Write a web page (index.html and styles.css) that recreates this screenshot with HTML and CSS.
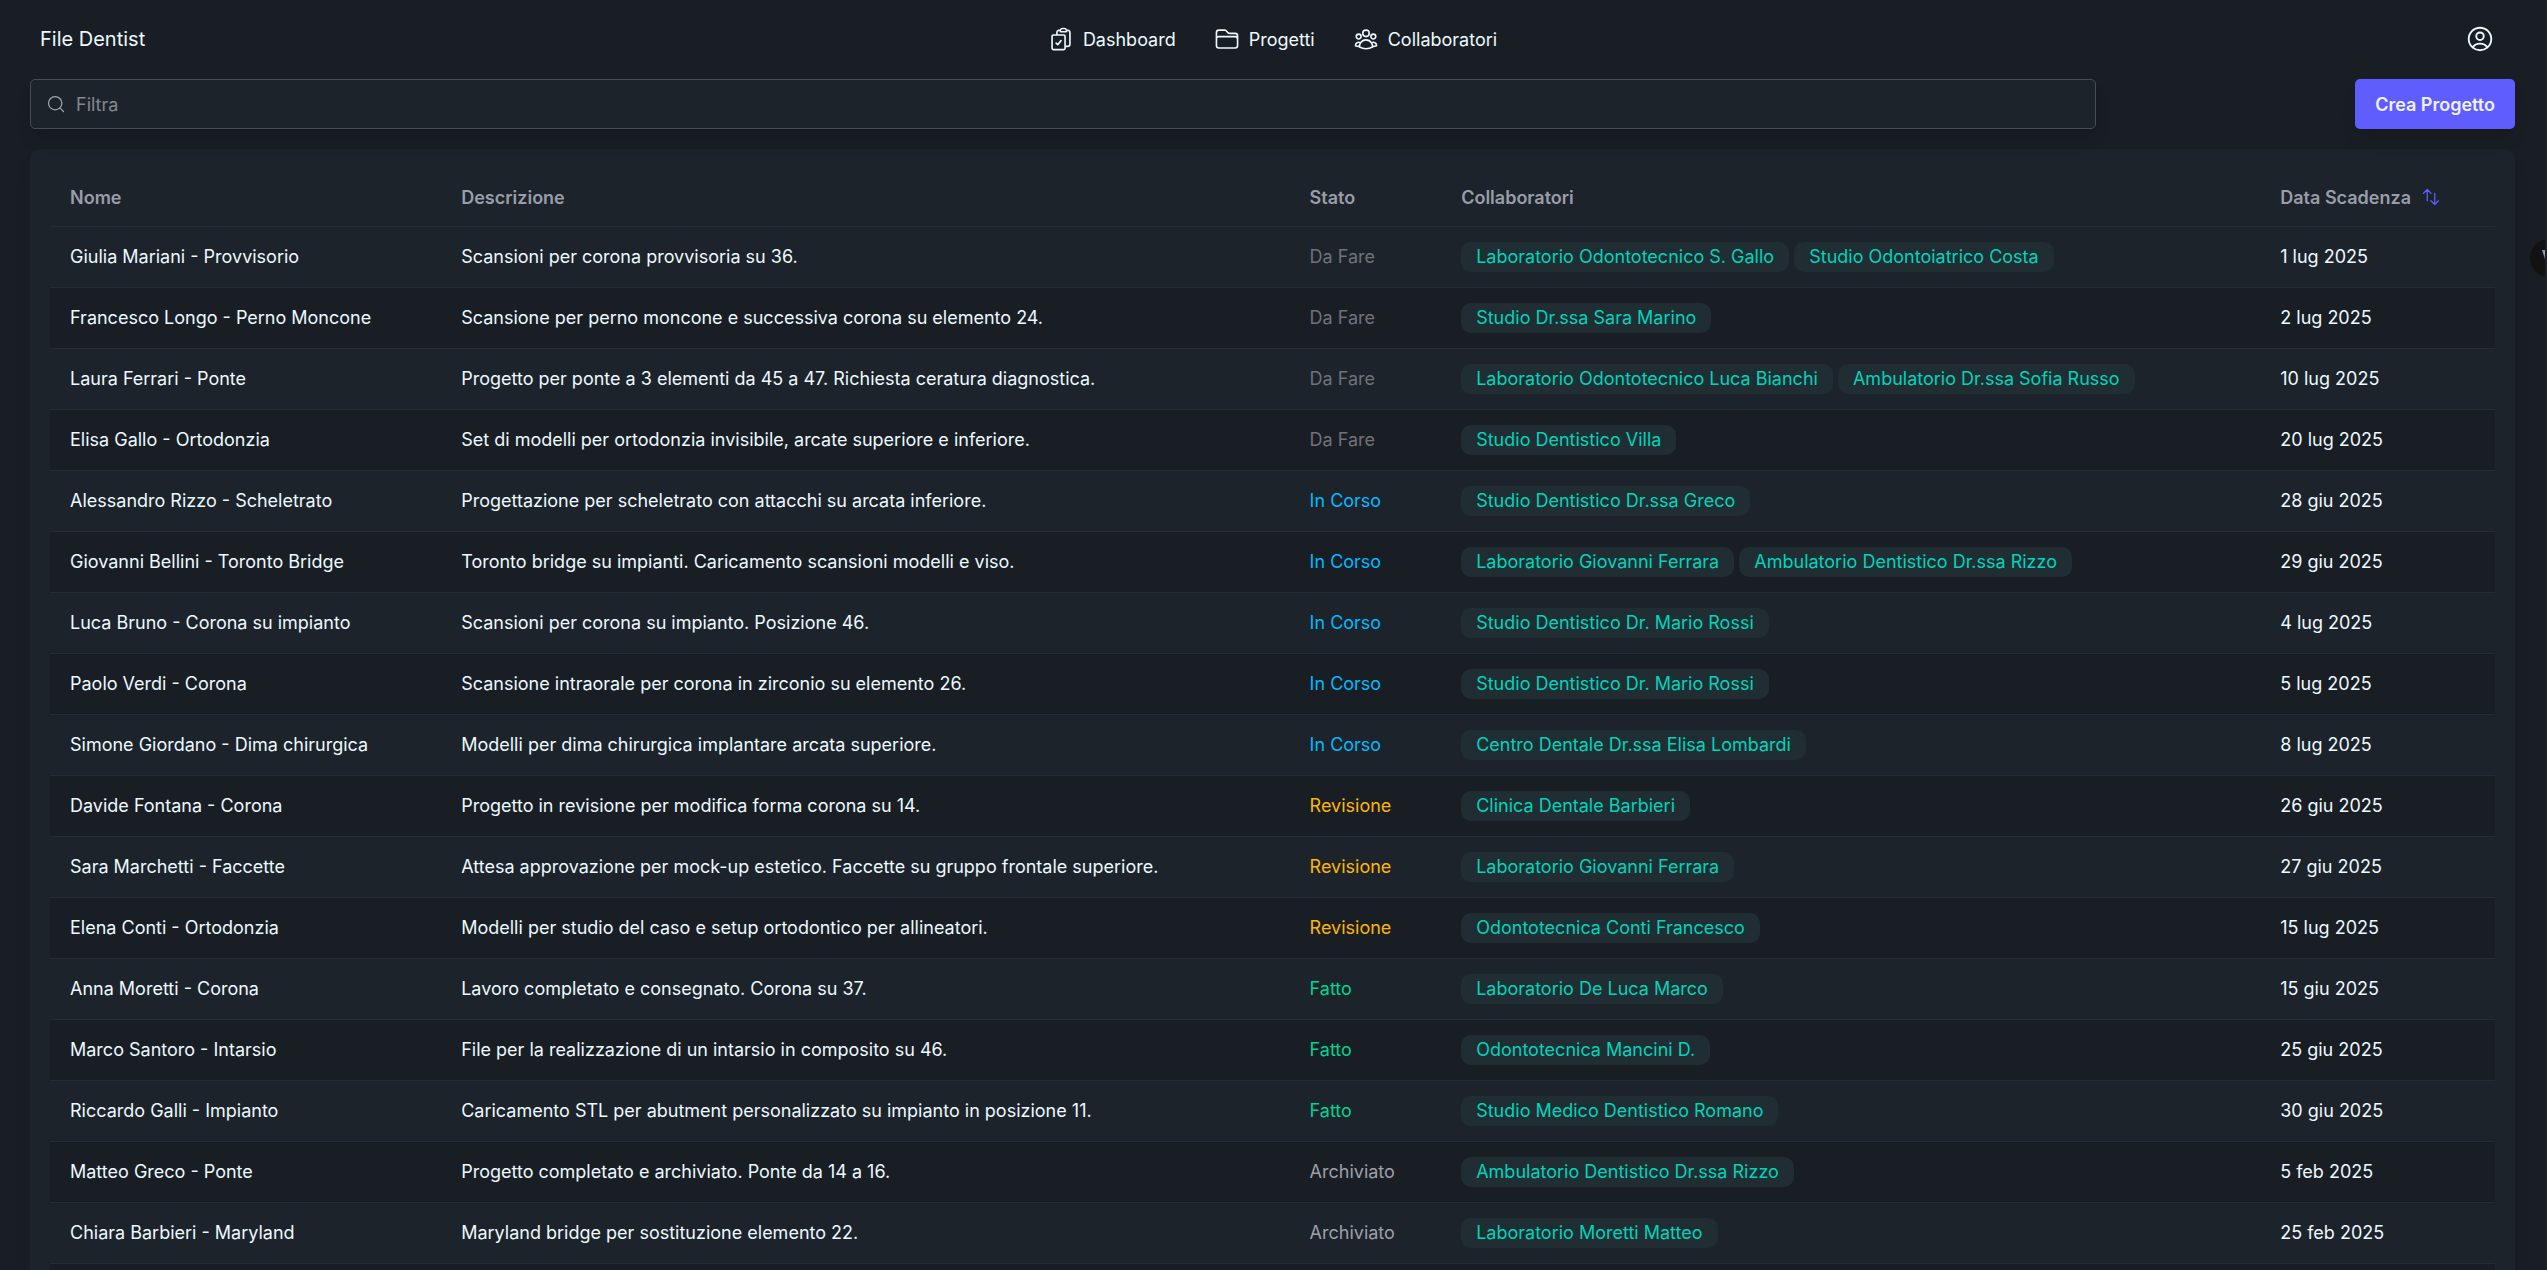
FILE: index.html
```html
<!DOCTYPE html>
<html lang="it">
<head>
  <meta charset="UTF-8">
  <meta name="viewport" content="width=device-width, initial-scale=1.0">
  <title>File Dentist</title>
  <link rel="stylesheet" href="styles.css">
</head>
<body>
<div class="page">
  <header class="navbar">
    <a href="#" class="brand">File Dentist</a>
    <nav class="menu">
      <a href="#">
        <svg class="icon" viewBox="0 0 24 24"><path d="M11.35 3.836c-.065.21-.1.433-.1.664 0 .414.336.75.75.75h4.5a.75.75 0 0 0 .75-.75 2.25 2.25 0 0 0-.1-.664m-5.8 0A2.251 2.251 0 0 1 13.5 2.25H15c1.012 0 1.867.668 2.15 1.586m-5.8 0c-.376.023-.75.05-1.124.08C9.095 4.01 8.25 4.973 8.25 6.108V8.25m8.9-4.414c.376.023.75.05 1.124.08 1.131.094 1.976 1.057 1.976 2.192V16.5A2.25 2.25 0 0 1 18 18.75h-2.25m-7.5-10.5H4.875c-.621 0-1.125.504-1.125 1.125v11.25c0 .621.504 1.125 1.125 1.125h9.75c.621 0 1.125-.504 1.125-1.125V18.75m-7.5-10.5h6.375c.621 0 1.125.504 1.125 1.125v9.375m-8.25-3 1.5 1.5 3-3.75"/></svg>
        Dashboard
      </a>
      <a href="#">
        <svg class="icon" viewBox="0 0 24 24"><path d="M2.25 12.75V12A2.25 2.25 0 0 1 4.5 9.75h15A2.25 2.25 0 0 1 21.75 12v.75m-8.69-6.44-2.12-2.12a1.5 1.5 0 0 0-1.061-.44H4.5A2.25 2.25 0 0 0 2.25 6v12a2.25 2.25 0 0 0 2.25 2.25h15A2.25 2.25 0 0 0 21.75 18V9a2.25 2.25 0 0 0-2.25-2.25h-5.379a1.5 1.5 0 0 1-1.06-.44Z"/></svg>
        Progetti
      </a>
      <a href="#">
        <svg class="icon" viewBox="0 0 24 24"><path d="M18 18.72a9.094 9.094 0 0 0 3.741-.479 3 3 0 0 0-4.682-2.72m.94 3.198.001.031c0 .225-.012.447-.037.666A11.944 11.944 0 0 1 12 21c-2.17 0-4.207-.576-5.963-1.584A6.062 6.062 0 0 1 6 18.719m12 0a5.971 5.971 0 0 0-.941-3.197m0 0A5.995 5.995 0 0 0 12 12.75a5.995 5.995 0 0 0-5.058 2.772m0 0a3 3 0 0 0-4.681 2.72 8.986 8.986 0 0 0 3.74.477m.94-3.197a5.971 5.971 0 0 0-.94 3.197M15 6.75a3 3 0 1 1-6 0 3 3 0 0 1 6 0Zm6 3a2.25 2.25 0 1 1-4.5 0 2.25 2.25 0 0 1 4.5 0Zm-13.5 0a2.25 2.25 0 1 1-4.5 0 2.25 2.25 0 0 1 4.5 0Z"/></svg>
        Collaboratori
      </a>
    </nav>
    <div class="navbar-end">
      <button type="button" class="profile" aria-label="Profilo">
        <svg viewBox="0 0 24 24"><path d="M17.982 18.725A7.488 7.488 0 0 0 12 15.75a7.488 7.488 0 0 0-5.982 2.975m11.963 0a9 9 0 1 0-11.963 0m11.963 0A8.966 8.966 0 0 1 12 21a8.966 8.966 0 0 1-5.982-2.275M15 9.75a3 3 0 1 1-6 0 3 3 0 0 1 6 0Z"/></svg>
      </button>
    </div>
  </header>

  <main>
    <div class="toolbar">
      <label class="search">
        <svg viewBox="0 0 24 24"><circle cx="11" cy="11" r="8"/><path d="m21 21-4.300-4.300"/></svg>
        <input type="text" placeholder="Filtra" aria-label="Filtra">
      </label>
      <button type="button" class="btn">Crea Progetto</button>
    </div>

    <div class="card">
      <table>
        <colgroup>
          <col class="col-name">
          <col class="col-description">
          <col class="col-status">
          <col class="col-people">
          <col>
        </colgroup>
        <thead>
          <tr>
            <th>Nome</th>
            <th>Descrizione</th>
            <th>Stato</th>
            <th>Collaboratori</th>
            <th>
              <button type="button" class="sort">
                Data Scadenza
                <svg viewBox="0 0 24 24"><path d="M3 7.500 7.500 3m0 0L12 7.500M7.500 3v13.500m13.500 0L16.500 21m0 0L12 16.500m4.500 4.500V7.500"/></svg>
              </button>
            </th>
          </tr>
        </thead>
        <tbody>
          <tr><td>Giulia Mariani - Provvisorio</td><td>Scansioni per corona provvisoria su 36.</td><td class="todo">Da Fare</td><td><span class="badge">Laboratorio Odontotecnico S. Gallo</span> <span class="badge">Studio Odontoiatrico Costa</span></td><td>1 lug 2025</td></tr>
          <tr><td>Francesco Longo - Perno Moncone</td><td>Scansione per perno moncone e successiva corona su elemento 24.</td><td class="todo">Da Fare</td><td><span class="badge">Studio Dr.ssa Sara Marino</span></td><td>2 lug 2025</td></tr>
          <tr><td>Laura Ferrari - Ponte</td><td>Progetto per ponte a 3 elementi da 45 a 47. Richiesta ceratura diagnostica.</td><td class="todo">Da Fare</td><td><span class="badge">Laboratorio Odontotecnico Luca Bianchi</span> <span class="badge">Ambulatorio Dr.ssa Sofia Russo</span></td><td>10 lug 2025</td></tr>
          <tr><td>Elisa Gallo - Ortodonzia</td><td>Set di modelli per ortodonzia invisibile, arcate superiore e inferiore.</td><td class="todo">Da Fare</td><td><span class="badge">Studio Dentistico Villa</span></td><td>20 lug 2025</td></tr>
          <tr><td>Alessandro Rizzo - Scheletrato</td><td>Progettazione per scheletrato con attacchi su arcata inferiore.</td><td class="doing">In Corso</td><td><span class="badge">Studio Dentistico Dr.ssa Greco</span></td><td>28 giu 2025</td></tr>
          <tr><td>Giovanni Bellini - Toronto Bridge</td><td>Toronto bridge su impianti. Caricamento scansioni modelli e viso.</td><td class="doing">In Corso</td><td><span class="badge">Laboratorio Giovanni Ferrara</span> <span class="badge">Ambulatorio Dentistico Dr.ssa Rizzo</span></td><td>29 giu 2025</td></tr>
          <tr><td>Luca Bruno - Corona su impianto</td><td>Scansioni per corona su impianto. Posizione 46.</td><td class="doing">In Corso</td><td><span class="badge">Studio Dentistico Dr. Mario Rossi</span></td><td>4 lug 2025</td></tr>
          <tr><td>Paolo Verdi - Corona</td><td>Scansione intraorale per corona in zirconio su elemento 26.</td><td class="doing">In Corso</td><td><span class="badge">Studio Dentistico Dr. Mario Rossi</span></td><td>5 lug 2025</td></tr>
          <tr><td>Simone Giordano - Dima chirurgica</td><td>Modelli per dima chirurgica implantare arcata superiore.</td><td class="doing">In Corso</td><td><span class="badge">Centro Dentale Dr.ssa Elisa Lombardi</span></td><td>8 lug 2025</td></tr>
          <tr><td>Davide Fontana - Corona</td><td>Progetto in revisione per modifica forma corona su 14.</td><td class="review">Revisione</td><td><span class="badge">Clinica Dentale Barbieri</span></td><td>26 giu 2025</td></tr>
          <tr><td>Sara Marchetti - Faccette</td><td>Attesa approvazione per mock-up estetico. Faccette su gruppo frontale superiore.</td><td class="review">Revisione</td><td><span class="badge">Laboratorio Giovanni Ferrara</span></td><td>27 giu 2025</td></tr>
          <tr><td>Elena Conti - Ortodonzia</td><td>Modelli per studio del caso e setup ortodontico per allineatori.</td><td class="review">Revisione</td><td><span class="badge">Odontotecnica Conti Francesco</span></td><td>15 lug 2025</td></tr>
          <tr><td>Anna Moretti - Corona</td><td>Lavoro completato e consegnato. Corona su 37.</td><td class="done">Fatto</td><td><span class="badge">Laboratorio De Luca Marco</span></td><td>15 giu 2025</td></tr>
          <tr><td>Marco Santoro - Intarsio</td><td>File per la realizzazione di un intarsio in composito su 46.</td><td class="done">Fatto</td><td><span class="badge">Odontotecnica Mancini D.</span></td><td>25 giu 2025</td></tr>
          <tr><td>Riccardo Galli - Impianto</td><td>Caricamento STL per abutment personalizzato su impianto in posizione 11.</td><td class="done">Fatto</td><td><span class="badge">Studio Medico Dentistico Romano</span></td><td>30 giu 2025</td></tr>
          <tr><td>Matteo Greco - Ponte</td><td>Progetto completato e archiviato. Ponte da 14 a 16.</td><td class="archived">Archiviato</td><td><span class="badge">Ambulatorio Dentistico Dr.ssa Rizzo</span></td><td>5 feb 2025</td></tr>
          <tr><td>Chiara Barbieri - Maryland</td><td>Maryland bridge per sostituzione elemento 22.</td><td class="archived">Archiviato</td><td><span class="badge">Laboratorio Moretti Matteo</span></td><td>25 feb 2025</td></tr>
          <tr><td></td><td></td><td></td><td></td><td></td></tr>
        </tbody>
      </table>
    </div>
  </main>

  <button type="button" class="fab">V</button>
</div>
</body>
</html>
```
FILE: styles.css
```css
* {
  box-sizing: border-box;
}

body {
  margin: 0;
  background: #191e24;
  color: #ecf9ff;
  font-family: Inter, sans-serif;
  font-size: 18px;
  line-height: 25px;
}

.page {
  position: relative;
  height: 100vh;
  overflow: hidden;
  border-right: 2px solid #1d232a;
}

a {
  color: inherit;
  text-decoration: none;
}

button {
  border: none;
  background: none;
  padding: 0;
  color: inherit;
  font: inherit;
  cursor: pointer;
}

svg {
  flex: none;
  fill: none;
  stroke: currentColor;
  stroke-width: 1.5;
  stroke-linecap: round;
  stroke-linejoin: round;
}

.navbar {
  display: grid;
  grid-template-columns: 1fr auto 1fr;
  align-items: center;
  height: 78px;
  margin-bottom: 1px;
  padding: 0 40px;
}

.brand {
  font-size: 20px;
}

.menu {
  display: flex;
  gap: 38px;
}

.menu a {
  display: flex;
  align-items: center;
  gap: 9px;
}

.icon {
  width: 26px;
  height: 26px;
}

.navbar-end {
  display: flex;
  justify-content: flex-end;
  padding-right: 10px;
}

.profile,
.profile svg {
  display: block;
  width: 30px;
  height: 30px;
}

main {
  padding: 0 30px;
}

.toolbar {
  display: flex;
  justify-content: space-between;
  align-items: center;
  margin-bottom: 20px;
}

.search {
  display: flex;
  align-items: center;
  gap: 10px;
  width: 83.15%;
  height: 50px;
  padding: 0 15px;
  background: #1d232a;
  border: 1px solid #484d55;
  border-radius: 5px;
  box-shadow: 0 12px 19px -4px rgba(0, 0, 0, 0.1), 0 5px 8px -5px rgba(0, 0, 0, 0.1);
}

.search svg {
  width: 20px;
  height: 20px;
  color: #a0a5ad;
}

.search input {
  flex: 1;
  padding: 0;
  border: none;
  outline: none;
  background: transparent;
  color: inherit;
  font: inherit;
}

.search input::placeholder {
  color: #84888f;
}

.btn {
  height: 50px;
  padding: 0 20px;
  background: #605dff;
  color: #edf1fe;
  border-radius: 5px;
  font-weight: 600;
  box-shadow: 0 12px 19px -4px rgba(0, 0, 0, 0.1), 0 5px 8px -5px rgba(0, 0, 0, 0.1);
}

.card {
  padding: 20px;
  background: #1d232a;
  border-radius: 10px;
  box-shadow: 0 12px 19px -4px rgba(0, 0, 0, 0.1);
}

table {
  width: 100%;
  table-layout: fixed;
  border-collapse: collapse;
  text-align: left;
}

.col-name {
  width: 16%;
}

.col-description {
  width: 34.7%;
}

.col-status {
  width: 6.2%;
}

.col-people {
  width: 33.5%;
}

th {
  height: 57px;
  padding: 0 20px;
  color: #989ea9;
  font-weight: 600;
}

td {
  height: 61px;
  padding: 0 20px;
}

tr {
  border-bottom: 1px solid #262c33;
}

tbody tr:nth-child(even) {
  background: #191e24;
}

.sort {
  display: flex;
  align-items: center;
  gap: 10px;
}

.sort svg {
  width: 20px;
  height: 20px;
  color: #605dff;
}

.badge {
  display: inline-flex;
  align-items: center;
  height: 30px;
  padding: 0 15px;
  border-radius: 10px;
  background: #202e33;
  color: #00d3bb;
}

.todo {
  color: #71717b;
}

.doing {
  color: #00bafe;
}

.review {
  color: #fcb700;
}

.done {
  color: #00d390;
}

.archived {
  color: #9f9fa9;
}

/* chat bubble, half hidden past the right edge */
.fab {
  position: absolute;
  top: 239px;
  right: -23px;
  width: 38px;
  height: 38px;
  border-radius: 50%;
  background: #121212;
  color: #9a9a9a;
  font-size: 20px;
  font-weight: 700;
}
```
